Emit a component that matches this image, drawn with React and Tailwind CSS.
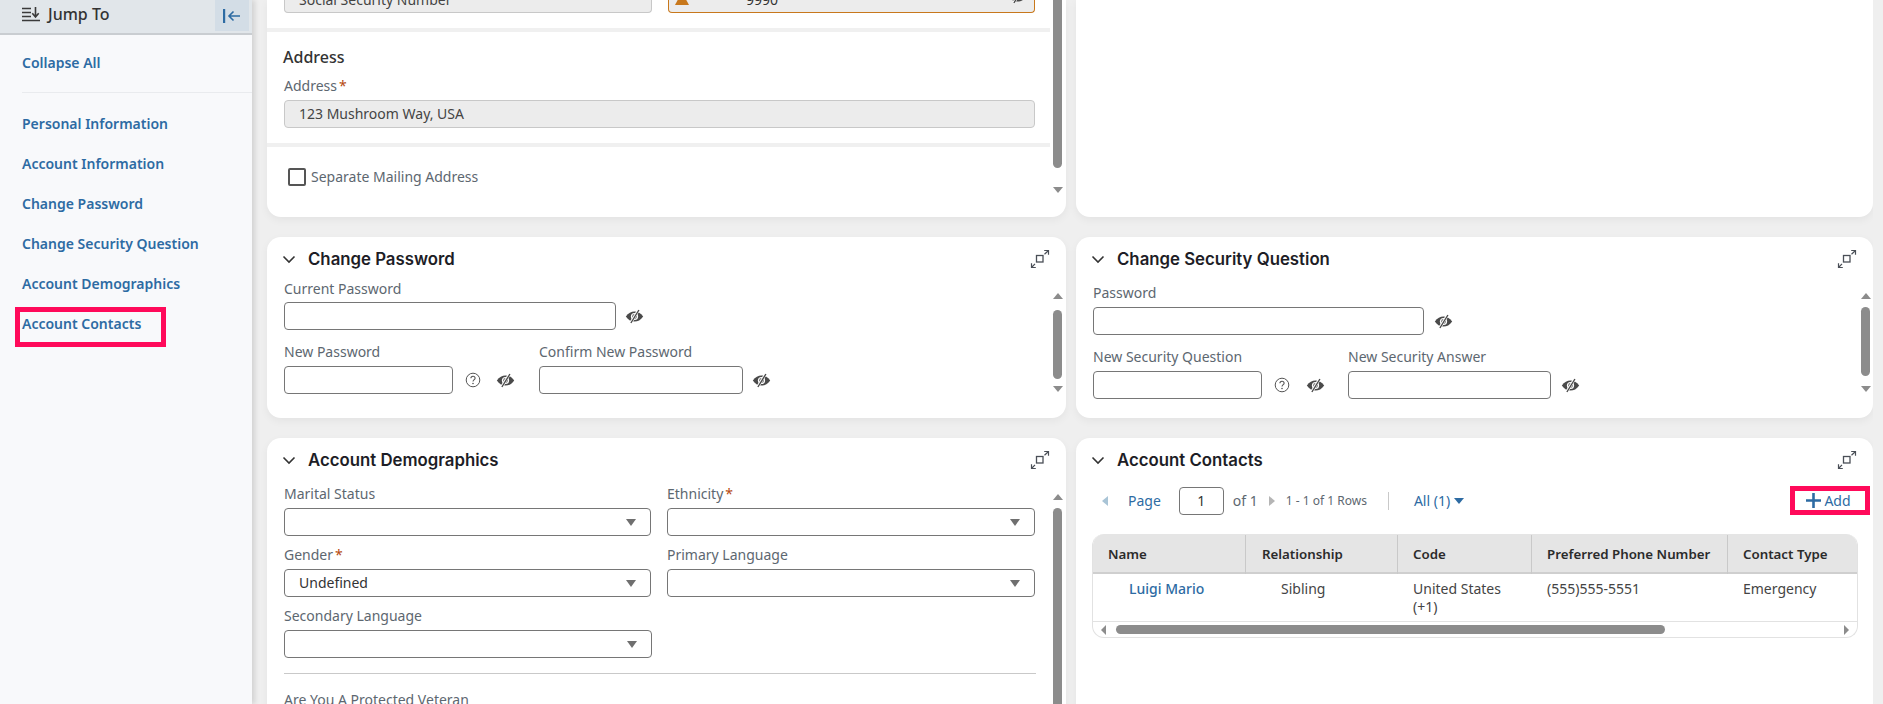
import React from "react";

const Eye = () => (
  <svg width="19" height="15" viewBox="0 0 19 15" className="shrink-0">
    <path d="M.8 7.5C3.3 3.8 6.2 2.4 9.5 2.4S15.7 3.8 18.2 7.5C15.7 11.2 12.8 12.6 9.5 12.6S3.3 11.2.8 7.5Z" fill="#4a4a4a" />
    <circle cx="9.5" cy="7.5" r="3.6" fill="#fff" />
    <circle cx="9.5" cy="7.5" r="2.4" fill="#6a6a6a" />
    <path d="M13.6 1 5.6 14" stroke="#fff" strokeWidth="2.8" />
    <path d="M13.9 1 5.9 14" stroke="#4a4a4a" strokeWidth="1.4" />
  </svg>
);

const Help = () => (
  <svg width="16" height="16" viewBox="0 0 16 16" className="shrink-0">
    <circle cx="8" cy="8" r="6.8" fill="none" stroke="#555" strokeWidth="1" />
    <path d="M5.9 6.3C5.9 5 6.9 4.2 8 4.2S10.1 5 10.1 6.2C10.1 7.6 8 7.7 8 9.6" fill="none" stroke="#555" strokeWidth="1.1" />
    <circle cx="8" cy="11.5" r=".8" fill="#555" />
  </svg>
);

const Expand = () => (
  <svg width="20" height="20" viewBox="0 0 20 20" className="shrink-0">
    <rect x="6.5" y="6.5" width="6.5" height="6.5" fill="none" stroke="#4a4f57" strokeWidth="1.3" />
    <path d="M14.5 5.2 18.5 1.5M14.2 1.5H18.5V5.8M5 14.8 1.5 18.5M1.5 14.2V18.5H5.8" fill="none" stroke="#4a4f57" strokeWidth="1.2" />
  </svg>
);

const Chevron = () => (
  <svg width="14" height="9" viewBox="0 0 14 9" className="shrink-0">
    <path d="M1.5 1.5 7 7l5.5-5.5" fill="none" stroke="#333" strokeWidth="1.6" />
  </svg>
);

const Caret = () => <span className="block h-0 w-0 border-x-[5px] border-t-[7px] border-x-transparent border-t-[#6f6f6f]" />;
const Up = () => <span className="block h-0 w-0 border-x-[5px] border-b-[6px] border-x-transparent border-b-[#8c8c8c]" />;
const Down = () => <span className="block h-0 w-0 border-x-[5px] border-t-[6px] border-x-transparent border-t-[#8c8c8c]" />;

const Star = () => <span className="ml-[2px] text-[#b5490f]">*</span>;

const Label = ({ children, req }) => (
  <div className="h-[20px] text-[14px] leading-[20px] text-[#5d6770] whitespace-nowrap">
    {children}
    {req && <Star />}
  </div>
);

const TextBox = ({ w }) => <div className={"h-[28px] rounded-[4px] border border-[#767676] bg-white " + w} />;

const Select = ({ value, w = "w-full" }) => (
  <div className={"flex h-[28px] items-center justify-between rounded-[4px] border border-[#767676] bg-white pl-[14px] pr-[14px] text-[14px] text-[#333] " + w}>
    <span className="mb-[2px]">{value}</span>
    <Caret />
  </div>
);

const Scrollbar = ({ thumbTop, thumb, gap }) => (
  <div className="flex h-[118px] w-[9px] shrink-0 flex-col items-center pt-[10px]">
    <Up />
    <div className="w-[9px] shrink-0 rounded-[5px] bg-[#8c8c8c]" style={{ marginTop: thumbTop, height: thumb }} />
    <div style={{ marginTop: gap }}>
      <Down />
    </div>
  </div>
);

const Panel = ({ title, children }) => (
  <section className="h-full overflow-hidden rounded-[14px] bg-white shadow-[0_3px_8px_rgba(0,0,0,0.05)]">
    <header className="flex h-[46px] items-center pb-[2px] pl-[15px] pr-[7px]">
      <Chevron />
      <h2 className="ml-[12px] flex-1 text-[16.8px] font-semibold leading-[22px] text-[#1d1d26] [font-family:'Inter',sans-serif]">{title}</h2>
      <div className="mr-[9px]">
        <Expand />
      </div>
    </header>
    {children}
  </section>
);

const Side = ({ children, boxed }) => (
  <a className="relative block h-[40px] text-[14px] font-semibold leading-[40px] text-[#2d6ba3]">
    {children}
    {boxed && <span className="absolute left-[-7px] top-[3px] h-[40px] w-[151px] border-[5px] border-[#ff0a5a]" />}
  </a>
);

export default function App() {
  return (
    <div className="flex h-[704px] w-[1883px] overflow-hidden bg-[#efefef] [font-family:'Noto_Sans',sans-serif]">
      <aside className="z-10 w-[252px] shrink-0 bg-[#f8f9fb] shadow-[3px_0_5px_rgba(0,0,0,0.12)]">
        <div className="flex h-[35px] items-start border-b-2 border-[#c9cdd1] bg-[#e1e6ea] pl-[22px] pr-[3px]">
          <svg width="18" height="15" viewBox="0 0 18 15" className="mt-[7px] shrink-0">
            <path d="M0 1.5H9M0 5.5H9M0 9.5H9M0 13.5H18" stroke="#3a3a3a" strokeWidth="1.6" />
            <path d="M13.5 0V9M10.3 6.2 13.5 10l3.2-3.8" fill="none" stroke="#3a3a3a" strokeWidth="1.6" />
          </svg>
          <span className="ml-[8px] mt-[2px] flex-1 text-[16px] font-medium leading-[24px] text-[#333]">Jump To</span>
          <span className="flex h-[31px] w-[34px] items-center justify-center bg-[#d3dde6]">
            <svg width="18" height="16" viewBox="0 0 18 16">
              <path d="M1 1V15" stroke="#2d6ba3" strokeWidth="2.4" />
              <path d="M17 8H6M10.5 3.5 6 8 10.5 12.5" fill="none" stroke="#2d6ba3" strokeWidth="1.6" />
            </svg>
          </span>
        </div>
        <div className="pl-[22px]">
          <div className="h-[58px] border-b border-[#e9ebee] pt-[8px]">
            <a className="block text-[14px] font-semibold leading-[40px] text-[#2d6ba3]">Collapse All</a>
          </div>
          <nav className="pt-[11px]">
            <Side>Personal Information</Side>
            <Side>Account Information</Side>
            <Side>Change Password</Side>
            <Side>Change Security Question</Side>
            <Side>Account Demographics</Side>
            <Side boxed>Account Contacts</Side>
          </nav>
        </div>
      </aside>

      <main className="grid h-[704px] grid-cols-[799px_797px] grid-rows-[217px_181px_300px] gap-x-[10px] gap-y-[20px] overflow-hidden pl-[15px]">
        {/* top-left panel, scrolled */}
        <section className="flex overflow-hidden rounded-b-[14px] bg-white shadow-[0_3px_8px_rgba(0,0,0,0.05)]">
          <div className="w-[783px] shrink-0">
            <div className="flex h-[13px] items-end gap-[16px] pl-[17px]">
              <div className="flex h-[13px] w-[368px] items-end rounded-b-[4px] border border-t-0 border-[#c8c8c8] bg-[#ececec] pl-[14px] text-[14px] leading-[18px] text-[#444]">
                <span className="mb-[3px]">Social Security Number</span>
              </div>
              <div className="relative flex h-[13px] w-[367px] items-end overflow-hidden rounded-b-[4px] border border-t-0 border-[#c8781c] bg-[#ececec] pl-[6px] pr-[7px] text-[14px] leading-[18px] text-[#333]">
                <span className="mb-[7px] h-0 w-0 border-x-[7px] border-b-[13px] border-x-transparent border-b-[#c8781c]" />
                <span className="mb-[3px] ml-[57px] flex-1">9990</span>
                <span className="mb-[8px]">
                  <Eye />
                </span>
              </div>
            </div>
            <div className="mt-[15px] h-[4px] bg-[#f0f0f0]" />
            <div className="pl-[17px] pr-[15px]">
              <h3 className="ml-[-1px] mt-[14px] h-[22px] text-[16px] font-medium leading-[22px] text-[#333]">Address</h3>
              <div className="mt-[8px]">
                <Label req>Address</Label>
              </div>
              <div className="mt-[4px] flex h-[28px] w-[751px] items-center rounded-[4px] border border-[#c8c8c8] bg-[#ececec] pb-[2px] pl-[14px] text-[14px] text-[#444]">
                123 Mushroom Way, USA
              </div>
            </div>
            <div className="mt-[15px] h-[4px] bg-[#f0f0f0]" />
            <div className="mt-[19px] flex items-center pl-[21px] text-[14px] text-[#5d6770]">
              <span className="h-[18px] w-[18px] rounded-[2px] border-2 border-[#555] bg-white" />
              <span className="ml-[5px]">Separate Mailing Address</span>
            </div>
          </div>
          <div className="ml-[3px] flex h-[194px] w-[9px] flex-col items-center">
            <div className="h-[168px] w-[9px] shrink-0 rounded-b-[5px] bg-[#8c8c8c]" />
            <div className="mt-[19px]">
              <Down />
            </div>
          </div>
        </section>

        <section className="rounded-b-[14px] bg-white shadow-[0_3px_8px_rgba(0,0,0,0.05)]" />

        {/* Change Password */}
        <Panel title="Change Password">
          <div className="flex">
            <div className="h-[118px] w-[786px] shrink-0 overflow-hidden pl-[17px]">
              <div className="mt-[-4px]">
                <Label>Current Password</Label>
              </div>
              <div className="mt-[3px] flex items-center gap-[9px]">
                <TextBox w="w-[332px]" />
                <Eye />
              </div>
              <div className="mt-[12px] flex">
                <div>
                  <Label>New Password</Label>
                  <div className="mt-[4px] flex items-center">
                    <TextBox w="w-[169px]" />
                    <span className="ml-[12px]">
                      <Help />
                    </span>
                    <span className="ml-[15px]">
                      <Eye />
                    </span>
                  </div>
                </div>
                <div className="ml-[24px]">
                  <Label>Confirm New Password</Label>
                  <div className="mt-[4px] flex items-center gap-[9px]">
                    <TextBox w="w-[204px]" />
                    <Eye />
                  </div>
                </div>
              </div>
            </div>
            <Scrollbar thumbTop={11} thumb={69} gap={7} />
          </div>
        </Panel>

        {/* Change Security Question */}
        <Panel title="Change Security Question">
          <div className="flex">
            <div className="h-[118px] w-[785px] shrink-0 overflow-hidden pl-[17px]">
              <Label>Password</Label>
              <div className="mt-[4px] flex items-center gap-[10px]">
                <TextBox w="w-[331px]" />
                <Eye />
              </div>
              <div className="mt-[12px] flex">
                <div>
                  <Label>New Security Question</Label>
                  <div className="mt-[4px] flex items-center">
                    <TextBox w="w-[169px]" />
                    <span className="ml-[12px]">
                      <Help />
                    </span>
                    <span className="ml-[16px]">
                      <Eye />
                    </span>
                  </div>
                </div>
                <div className="ml-[23px]">
                  <Label>New Security Answer</Label>
                  <div className="mt-[4px] flex items-center gap-[10px]">
                    <TextBox w="w-[203px]" />
                    <Eye />
                  </div>
                </div>
              </div>
            </div>
            <Scrollbar thumbTop={8} thumb={69} gap={10} />
          </div>
        </Panel>

        {/* Account Demographics */}
        <Panel title="Account Demographics">
          <div className="flex">
            <div className="h-[230px] w-[786px] shrink-0 overflow-hidden pl-[17px]">
              <div className="grid w-[751px] grid-cols-[367px_368px] gap-x-[16px] gap-y-[9px]">
                <div>
                  <Label>Marital Status</Label>
                  <div className="mt-[4px]"><Select /></div>
                </div>
                <div>
                  <Label req>Ethnicity</Label>
                  <div className="mt-[4px]"><Select /></div>
                </div>
                <div>
                  <Label req>Gender</Label>
                  <div className="mt-[4px]"><Select value="Undefined" /></div>
                </div>
                <div>
                  <Label>Primary Language</Label>
                  <div className="mt-[4px]"><Select /></div>
                </div>
                <div>
                  <Label>Secondary Language</Label>
                  <div className="mt-[4px]"><Select w="w-[368px]" /></div>
                </div>
              </div>
              <div className="mt-[15px] h-px w-[752px] bg-[#c9c9c9]" />
              <div className="mt-[16px]">
                <Label>Are You A Protected Veteran</Label>
              </div>
            </div>
            <div className="flex w-[9px] flex-col items-center pt-[10px]">
              <Up />
              <div className="mt-[8px] h-[216px] w-[9px] shrink-0 rounded-t-[5px] bg-[#8c8c8c]" />
            </div>
          </div>
        </Panel>

        {/* Account Contacts */}
        <Panel title="Account Contacts">
          <div className="pl-[16px] pr-[3px]">
            <div className="mt-[2px] flex h-[29px] items-center pl-[10px] text-[14px] text-[#5d6770]">
              <span className="h-0 w-0 border-y-[5px] border-r-[6px] border-y-transparent border-r-[#a9c4d6]" />
              <span className="ml-[20px] text-[#2d6ba3]">Page</span>
              <span className="ml-[18px] flex h-[28px] w-[45px] items-center justify-center rounded-[4px] border border-[#767676] text-[#333]">1</span>
              <span className="ml-[9px]">of 1</span>
              <span className="ml-[11px] h-0 w-0 border-y-[5px] border-l-[6px] border-y-transparent border-l-[#b5b5b5]" />
              <span className="ml-[11px] text-[12px]">1 - 1 of 1 Rows</span>
              <span className="ml-[21px] h-[18px] w-px bg-[#c9c9c9]" />
              <span className="ml-[25px] text-[#2d6ba3]">All (1)</span>
              <span className="ml-[4px] h-0 w-0 border-x-[5px] border-t-[6px] border-x-transparent border-t-[#2d6ba3]" />
              <button className="ml-auto flex h-[29px] w-[80px] items-center justify-center gap-[3px] border-[5px] border-[#ff0a5a] pr-[3px] text-[14px] text-[#2d6ba3]">
                <svg width="15" height="15" viewBox="0 0 15 15" className="shrink-0">
                  <path d="M7.5 0V15M0 7.5H15" stroke="#2d6ba3" strokeWidth="2.6" />
                </svg>
                Add
              </button>
            </div>
            <div className="mt-[19px] w-[766px] overflow-hidden rounded-[12px] border-x border-b border-[#e2e2e2] text-[14px]">
              <div className="grid h-[40px] grid-cols-[153px_152px_134px_196px_1fr] items-center border-b-2 border-[#cfcfcf] bg-[#e5e5e5] pt-[1px] text-[13.3px] font-semibold leading-[39px] text-[#2b2b2b]">
                <div className="border-r border-[#c9c9c9] pl-[15px]">Name</div>
                <div className="border-r border-[#c9c9c9] pl-[16px]">Relationship</div>
                <div className="border-r border-[#c9c9c9] pl-[15px]">Code</div>
                <div className="border-r border-[#c9c9c9] pl-[15px]">Preferred Phone Number</div>
                <div className="pl-[15px]">Contact Type</div>
              </div>
              <div className="grid h-[48px] grid-cols-[153px_152px_134px_196px_1fr] border-b border-[#e2e2e2] pt-[6px] leading-[18px] text-[#444]">
                <div className="pl-[36px] font-medium text-[#2d6ba3]">Luigi Mario</div>
                <div className="pl-[35px]">Sibling</div>
                <div className="pl-[15px]">United States<br />(+1)</div>
                <div className="pl-[15px]">(555)555-5551</div>
                <div className="pl-[15px]">Emergency</div>
              </div>
              <div className="flex h-[15px] items-center pl-[8px] pr-[8px]">
                <span className="h-0 w-0 border-y-[5px] border-r-[5px] border-y-transparent border-r-[#8c8c8c]" />
                <span className="ml-[10px] h-[9px] w-[549px] rounded-[5px] bg-[#8c8c8c]" />
                <span className="ml-auto h-0 w-0 border-y-[5px] border-l-[5px] border-y-transparent border-l-[#8c8c8c]" />
              </div>
            </div>
          </div>
        </Panel>
      </main>
    </div>
  );
}
